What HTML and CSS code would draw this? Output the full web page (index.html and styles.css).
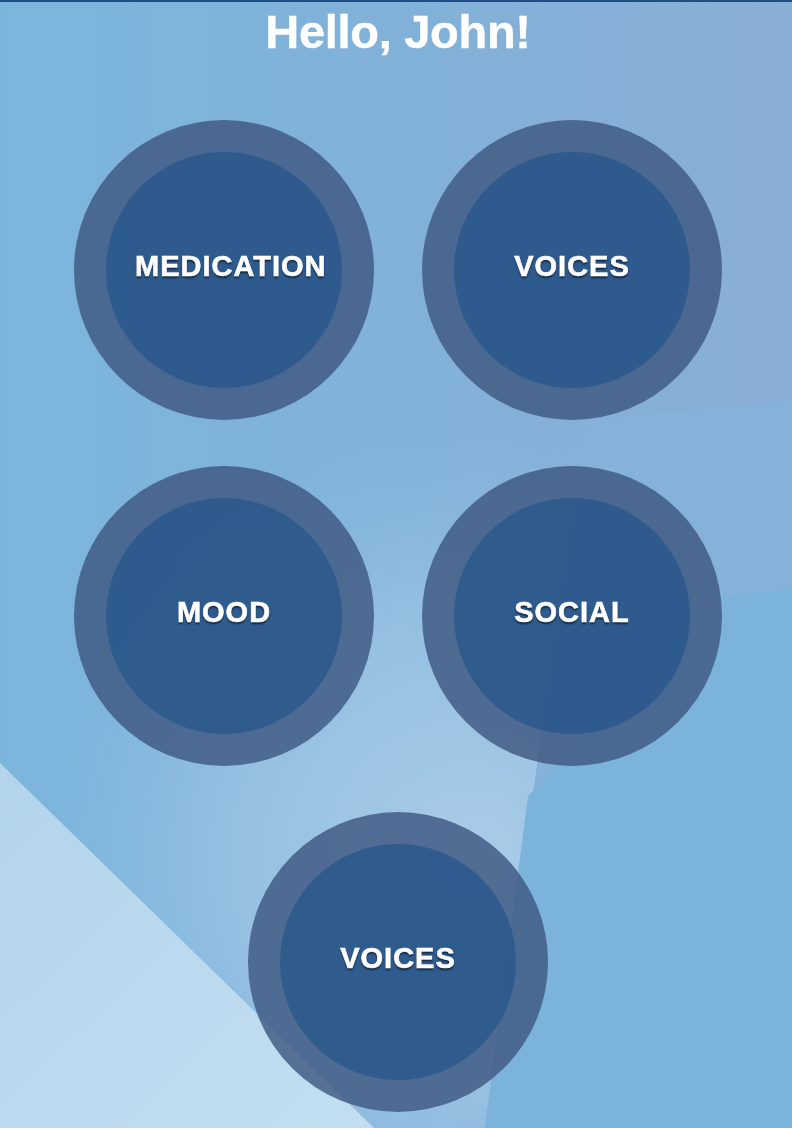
FILE: index.html
```html
<!DOCTYPE html>
<html lang="en">
<head>
<meta charset="utf-8">
<title>Hello, John!</title>
<link rel="stylesheet" href="styles.css">
</head>
<body>
<svg class="backdrop" viewBox="0 0 792 1128" preserveAspectRatio="none" aria-hidden="true">
  <defs>
    <linearGradient id="base" x1="0" y1="0" x2="1" y2="0">
      <stop offset="0" stop-color="#7cb5dc"/>
      <stop offset="0.55" stop-color="#82b1d8"/>
      <stop offset="1" stop-color="#89aed5"/>
    </linearGradient>
    <radialGradient id="glow" gradientUnits="userSpaceOnUse" cx="470" cy="860" r="430">
      <stop offset="0" stop-color="#aacce8" stop-opacity="1"/>
      <stop offset="0.55" stop-color="#9cc5e5" stop-opacity="0.75"/>
      <stop offset="1" stop-color="#8fbfe2" stop-opacity="0"/>
    </radialGradient>
    <linearGradient id="low" x1="0" y1="0" x2="1" y2="1">
      <stop offset="0" stop-color="#b2d4ec"/>
      <stop offset="1" stop-color="#c3def1"/>
    </linearGradient>
  </defs>
  <rect x="0" y="0" width="792" height="1128" fill="url(#base)"/>
  <polygon points="0,300 620,300 587,420 485,1128 0,1128" fill="url(#glow)"/>
  <polygon points="587,420 792,400 792,1128 485,1128" fill="#85b2d9"/>
  <polygon points="720,596 792,590 792,1128 485,1128 528,796" fill="#7bb3da"/>
  <polygon points="0,763 374,1128 0,1128" fill="url(#low)"/>
</svg>
<main class="page">
  <h1 class="greeting">Hello, John!</h1>
  <nav class="menu">
    <a class="bubble" href="#"><span class="bubble-inner"><span class="label">MEDICATION</span></span></a>
    <a class="bubble" href="#"><span class="bubble-inner"><span class="label">VOICES</span></span></a>
    <a class="bubble" href="#"><span class="bubble-inner"><span class="label">MOOD</span></span></a>
    <a class="bubble" href="#"><span class="bubble-inner"><span class="label">SOCIAL</span></span></a>
    <a class="bubble" href="#"><span class="bubble-inner"><span class="label">VOICES</span></span></a>
  </nav>
</main>
</body>
</html>
```
FILE: styles.css
```css
html, body {
  margin: 0;
  padding: 0;
}

body {
  min-height: 1126px;
  border-top: 2px solid #1f4d86;
  background: #7fb3da;
  font-family: "Liberation Sans", Arial, Helvetica, sans-serif;
  color: #ffffff;
  overflow: hidden;
}

.backdrop {
  position: fixed;
  left: 0;
  top: 0;
  width: 792px;
  height: 1128px;
  z-index: -1;
  display: block;
}

.page {
  padding-left: 4px;
  display: flex;
  flex-direction: column;
  align-items: center;
}

.greeting {
  margin: 0;
  padding-top: 6px;
  font-size: 47px;
  line-height: 47px;
  font-weight: 700;
  letter-spacing: -0.3px;
  text-align: center;
  -webkit-text-stroke: 0.4px #ffffff;
}

.menu {
  margin-top: 65px;
  width: 648px;
  display: flex;
  flex-wrap: wrap;
  justify-content: center;
  gap: 46px 48px;
}

.bubble {
  width: 300px;
  height: 300px;
  border-radius: 50%;
  background: rgba(62, 88, 129, 0.82);
  display: flex;
  align-items: center;
  justify-content: center;
  text-decoration: none;
  color: #ffffff;
}

.bubble-inner {
  width: 178px;
  height: 236px;
  padding: 0 29px;
  border-radius: 50%;
  background: rgba(40, 87, 140, 0.8);
  display: flex;
  flex-direction: column;
  justify-content: center;
  box-sizing: content-box;
}

.label {
  display: block;
  padding-bottom: 8px;
  font-size: 29px;
  font-weight: 700;
  letter-spacing: 1px;
  white-space: nowrap;
  text-align: center;
  -webkit-text-stroke: 0.6px #ffffff;
  text-shadow: 0 2px 2px rgba(8, 20, 40, 0.8);
}
```
